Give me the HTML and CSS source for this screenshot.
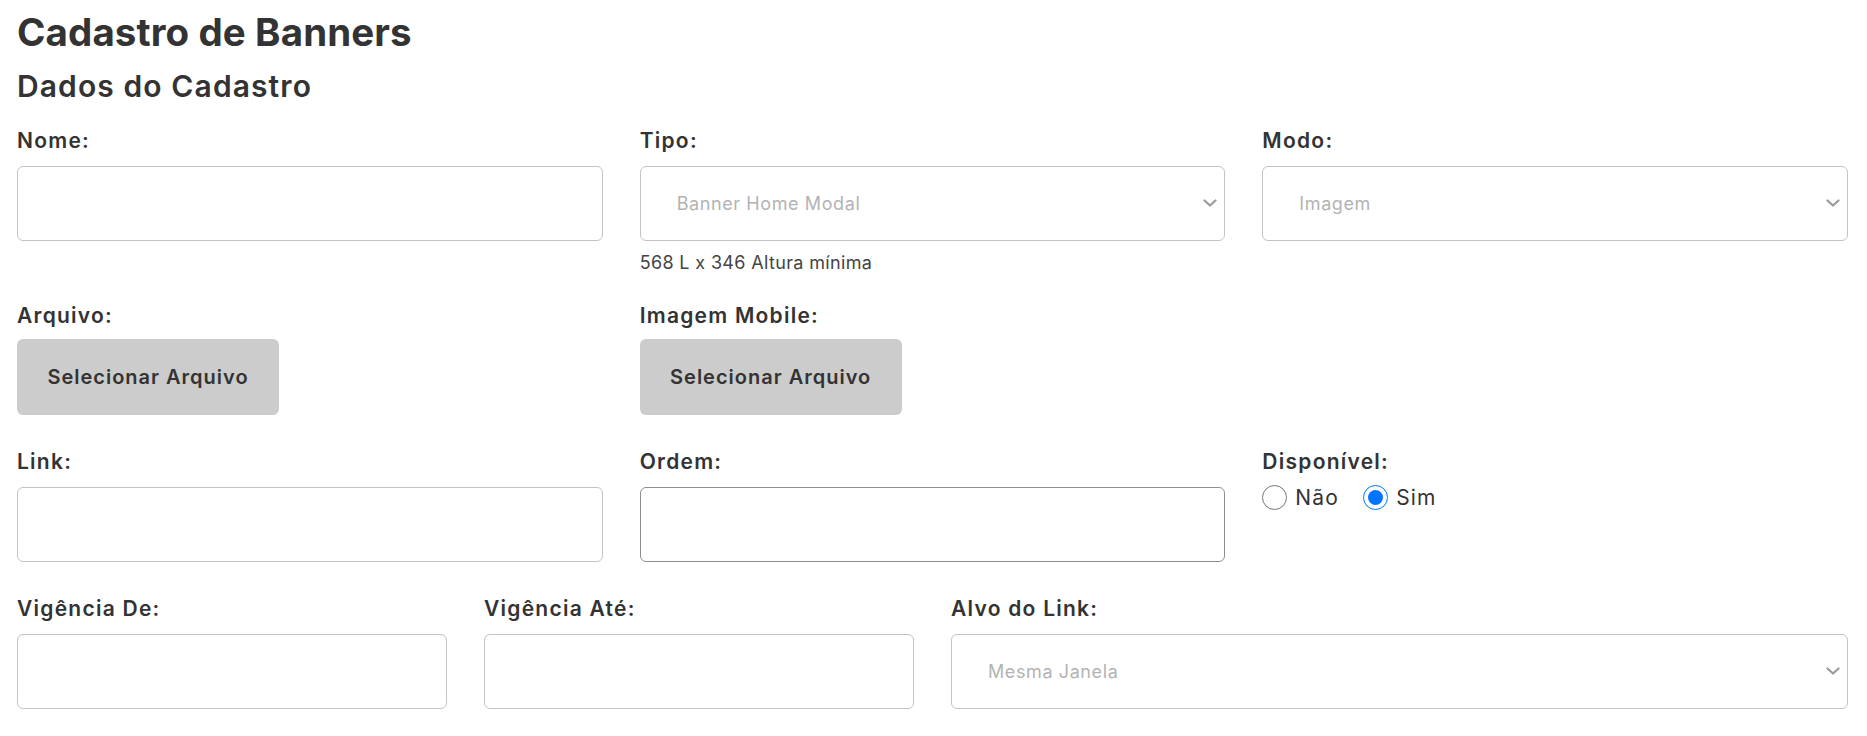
FILE: index.html
```html
<!DOCTYPE html>
<html lang="pt-BR">
<head>
<meta charset="utf-8">
<title>Cadastro de Banners</title>
<link rel="stylesheet" href="styles.css">
</head>
<body>
<main class="page">
  <h1 class="title">Cadastro de Banners</h1>
  <h2 class="subtitle">Dados do Cadastro</h2>

  <form class="form">
    <div class="row row-first">
      <div class="field col-4">
        <label class="label">Nome:</label>
        <input class="control" type="text">
      </div>
      <div class="field col-4">
        <label class="label">Tipo:</label>
        <div class="select-wrap">
          <select class="control select">
            <option>Banner Home Modal</option>
          </select>
          <svg class="chevron" viewBox="0 0 14 8" width="14" height="8"><path d="M1.5 1.5 L7 6.5 L12.5 1.5" fill="none" stroke="#9a9a9a" stroke-width="2.2" stroke-linecap="round" stroke-linejoin="round"/></svg>
        </div>
        <p class="hint">568 L x 346 Altura mínima</p>
      </div>
      <div class="field col-4">
        <label class="label">Modo:</label>
        <div class="select-wrap">
          <select class="control select">
            <option>Imagem</option>
          </select>
          <svg class="chevron" viewBox="0 0 14 8" width="14" height="8"><path d="M1.5 1.5 L7 6.5 L12.5 1.5" fill="none" stroke="#9a9a9a" stroke-width="2.2" stroke-linecap="round" stroke-linejoin="round"/></svg>
        </div>
      </div>
    </div>

    <div class="row">
      <div class="field col-4">
        <label class="label">Arquivo:</label>
        <button type="button" class="file-btn">Selecionar Arquivo</button>
      </div>
      <div class="field col-4">
        <label class="label">Imagem Mobile:</label>
        <button type="button" class="file-btn">Selecionar Arquivo</button>
      </div>
    </div>

    <div class="row">
      <div class="field col-4">
        <label class="label">Link:</label>
        <input class="control" type="text">
      </div>
      <div class="field col-4">
        <label class="label">Ordem:</label>
        <input class="control control-dark" type="text">
      </div>
      <div class="field col-4">
        <label class="label">Disponível:</label>
        <div class="radios">
          <label class="radio"><input type="radio" name="disp"> <span>Não</span></label>
          <label class="radio"><input type="radio" name="disp" checked> <span>Sim</span></label>
        </div>
      </div>
    </div>

    <div class="row">
      <div class="field col-3">
        <label class="label">Vigência De:</label>
        <input class="control" type="text">
      </div>
      <div class="field col-3">
        <label class="label">Vigência Até:</label>
        <input class="control" type="text">
      </div>
      <div class="field col-6">
        <label class="label">Alvo do Link:</label>
        <div class="select-wrap">
          <select class="control select">
            <option>Mesma Janela</option>
          </select>
          <svg class="chevron" viewBox="0 0 14 8" width="14" height="8"><path d="M1.5 1.5 L7 6.5 L12.5 1.5" fill="none" stroke="#9a9a9a" stroke-width="2.2" stroke-linecap="round" stroke-linejoin="round"/></svg>
        </div>
      </div>
    </div>
  </form>
</main>
</body>
</html>
```

FILE: styles.css
```css
* { box-sizing: border-box; }

html, body {
  margin: 0;
  padding: 0;
  background: #ffffff;
}

body {
  font-family: "Inter", "Open Sans", "DejaVu Sans", sans-serif;
  color: #333333;
}

.page {
  padding: 8px 19px 0 17px;
}

.title {
  margin: 0;
  font-size: 38.5px;
  line-height: 48px;
  font-weight: 700;
  letter-spacing: 0.1px;
  color: #333333;
}

.subtitle {
  margin: 12px 0 0;
  font-size: 30px;
  line-height: 36px;
  font-weight: 560;
  letter-spacing: 1.1px;
  color: #333333;
}

.form {
  margin-top: 25px;
}

.row {
  display: grid;
  grid-template-columns: repeat(12, 1fr);
  column-gap: 37px;
  margin-bottom: 35px;
  align-items: start;
}

.col-3 { grid-column: span 3; }
.col-4 { grid-column: span 4; }
.col-6 { grid-column: span 6; }

.field {
  display: flex;
  flex-direction: column;
  min-width: 0;
}

.label {
  display: block;
  font-size: 21px;
  line-height: 24px;
  font-weight: 600;
  letter-spacing: 1.25px;
  color: #333333;
  margin-bottom: 13px;
}

.control {
  display: block;
  width: 100%;
  height: 75px;
  border: 1.5px solid #c3c3c3;
  border-radius: 6px;
  background: #ffffff;
  font-family: inherit;
  font-size: 18px;
  letter-spacing: 0.6px;
  color: #333333;
  padding: 0 17px;
  outline: none;
}

.control-dark {
  border-color: #8e8e8e;
}

.select-wrap {
  position: relative;
}

.select {
  appearance: none;
  -webkit-appearance: none;
  padding-left: 36px;
  color: #b3b3b3;
}

.chevron {
  position: absolute;
  right: 8px;
  top: 33px;
  pointer-events: none;
}

.hint {
  margin: 11px 0 -4px;
  font-size: 18px;
  line-height: 21px;
  letter-spacing: 0.35px;
  color: #444444;
}

.file-btn {
  width: 262px;
  height: 76px;
  margin-top: -2px;
  border: none;
  border-radius: 6px;
  background: #cccccc;
  font-family: inherit;
  font-size: 20px;
  font-weight: 600;
  letter-spacing: 1px;
  color: #333333;
  padding: 0;
}

.radios {
  display: flex;
  align-items: center;
  height: 25px;
  margin-top: -2px;
}

.radio {
  display: flex;
  align-items: center;
  font-size: 21px;
  letter-spacing: 1.2px;
  color: #333333;
  margin-right: 24px;
}

.radio input {
  width: 25px;
  height: 25px;
  margin: 0 8px 0 0;
}
```
